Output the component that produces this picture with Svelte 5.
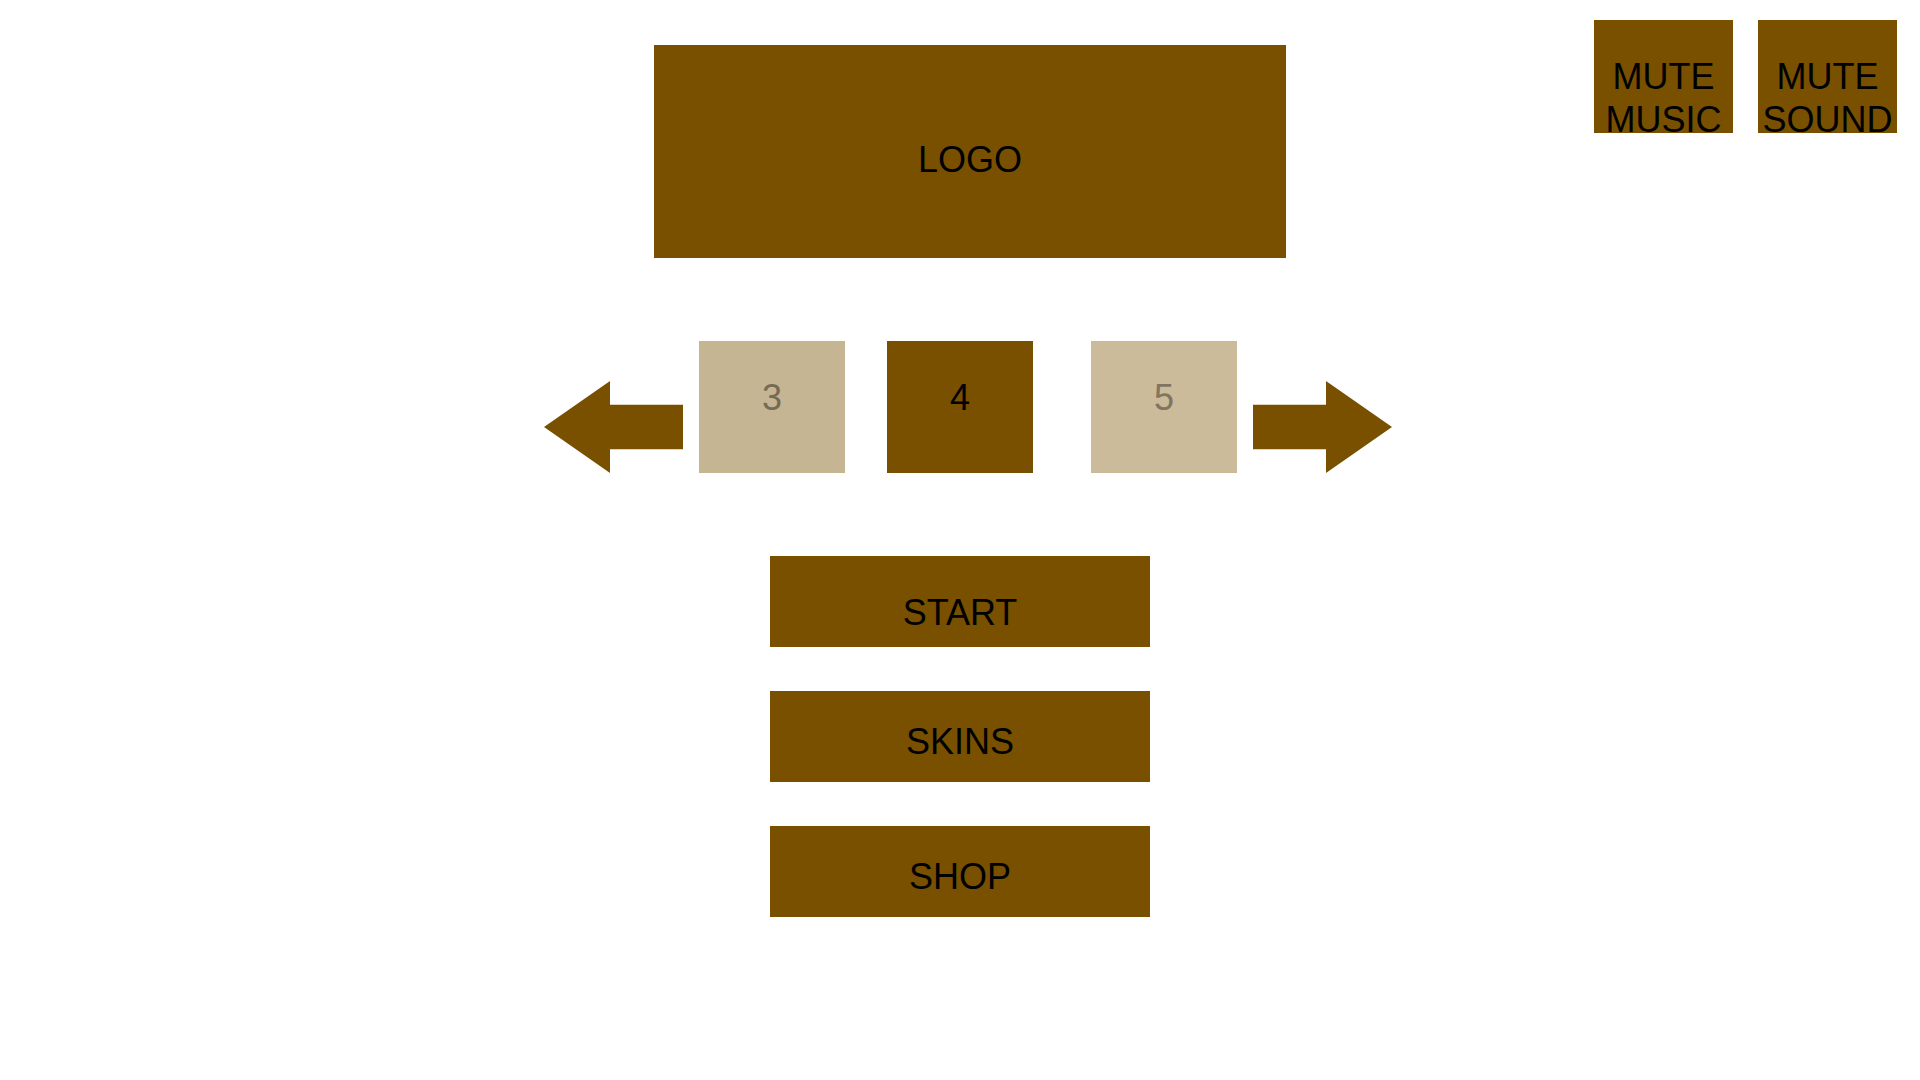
<script>
  const levels = [
    { number: 3, tone: 'previous' },
    { number: 4, tone: 'current' },
    { number: 5, tone: 'next' }
  ];
  const actions = ['START', 'SKINS', 'SHOP'];
</script>

<main>
  <header>
    <h1>LOGO</h1>
    <div class="mutes">
      <button class="mute">MUTE MUSIC</button>
      <button class="mute">MUTE SOUND</button>
    </div>
  </header>

  <section class="selector" aria-label="Level">
    <button class="arrow" aria-label="Previous level">
      <svg viewBox="0 0 139 92" aria-hidden="true">
        <path d="M0 46 66 0V23.8H139V68.2H66V92Z" />
      </svg>
    </button>
    <div class="levels">
      {#each levels as level}
        <button class="level {level.tone}">{level.number}</button>
      {/each}
    </div>
    <button class="arrow" aria-label="Next level">
      <svg viewBox="0 0 139 92" aria-hidden="true">
        <path d="M139 46 73 0V23.8H0V68.2H73V92Z" />
      </svg>
    </button>
  </section>

  <nav aria-label="Main menu">
    {#each actions as action}
      <button class="action">{action}</button>
    {/each}
  </nav>
</main>

<style>
  :global(body) {
    margin: 0;
    background: #fff;
  }

  main {
    display: flex;
    flex-direction: column;
    font-family: 'Liberation Sans', Arial, sans-serif;
    font-size: 36px;
    line-height: 43px;
    color: #000;
  }

  button {
    display: flex;
    justify-content: center;
    align-items: flex-start;
    box-sizing: border-box;
    margin: 0;
    padding: 0;
    border: 0;
    background: #785000;
    color: inherit;
    font: inherit;
    text-align: center;
    cursor: pointer;
  }

  header {
    display: grid;
    grid-template-columns: 1fr minmax(auto, 632px) 1fr;
    align-items: start;
    padding: 20px 0 0 20px;
  }

  h1 {
    grid-column: 2;
    box-sizing: border-box;
    min-height: 213px;
    margin: 25px 0 0;
    padding-top: 93px;
    background: #785000;
    font: inherit;
    text-align: center;
  }

  .mutes {
    display: flex;
    justify-content: flex-end;
    gap: 25px;
    padding-right: 23px;
  }

  .mute {
    width: 139px;
    height: 113px;
    padding-top: 35px;
  }

  .selector {
    display: flex;
    justify-content: center;
    align-items: flex-end;
    gap: 16px;
    padding: 83px 0 0 16px;
  }

  .arrow {
    width: 139px;
    background: none;
  }

  .arrow svg {
    display: block;
    width: 100%;
    fill: #785000;
  }

  .levels {
    display: flex;
  }

  .level {
    width: 146px;
    min-height: 132px;
    padding-top: 35px;
  }

  .previous {
    margin-right: 42px;
    background: #c6b592;
    color: #746a55;
  }

  .next {
    margin-left: 58px;
    background: #cbbb9b;
    color: #7f7561;
  }

  nav {
    display: flex;
    flex-direction: column;
    align-items: center;
    gap: 44px;
    padding: 83px 0;
  }

  .action {
    width: 380px;
    min-height: 91px;
    padding-top: 29px;
  }

  .action:first-child {
    padding-top: 35px;
  }
</style>
